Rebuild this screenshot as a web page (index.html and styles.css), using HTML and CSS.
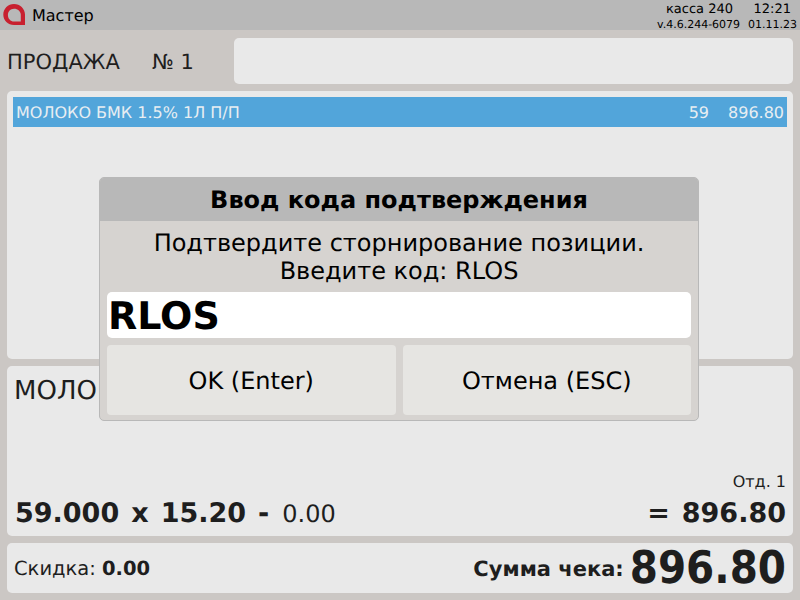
FILE: index.html
```html
<!DOCTYPE html>
<html lang="ru">
<head>
<meta charset="utf-8">
<title>Мастер</title>
<link rel="stylesheet" href="styles.css">
</head>
<body>
<div class="screen">
  <header class="topbar">
    <div class="brand">
      <svg class="logo" width="22" height="22" viewBox="0 0 22 22"><path fill-rule="evenodd" fill="#c8202f" d="M11 0C5 0 0.300 4.700 0.300 10.500C0.300 16.500 5 21 11 21L22 21L22 10.500C22 4.700 17 0 11 0ZM11 4.700C14.800 4.700 17.800 7.300 17.800 10.800L17.800 17.500L11 17.500C7.500 17.500 4.900 14.400 4.900 10.900C4.900 7.500 7.500 4.700 11 4.700Z"/></svg>
      <span class="brand-name">Мастер</span>
    </div>
    <div class="status">
      <div class="status-row status-top"><span>касса 240</span><span class="clock">12:21</span></div>
      <div class="status-row status-bottom"><span>v.4.6.244-6079</span><span class="date">01.11.23</span></div>
    </div>
  </header>
  <div class="sale-row">
    <div class="sale-label"><span class="sale-title">ПРОДАЖА</span><span class="sale-num">№ 1</span></div>
    <div class="search"></div>
  </div>
  <section class="panel list">
    <div class="item"><span>МОЛОКО БМК 1.5% 1Л П/П</span><span class="item-nums"><span>59</span><span>896.80</span></span></div>
  </section>
  <section class="panel detail">
    <div class="detail-name">МОЛОКО БМК 1.5% 1Л П/П</div>
    <div class="dept">Отд. 1</div>
    <div class="calc">
      <div class="calc-left"><b>59.000</b><b>x</b><b>15.20</b><b>-</b><span class="disc">0.00</span></div>
      <div class="calc-right"><b>=</b><b>896.80</b></div>
    </div>
  </section>
  <section class="panel totals">
    <div class="discount">Скидка: <b>0.00</b></div>
    <div class="total"><b class="total-label">Сумма чека:</b><b class="total-value">896.80</b></div>
  </section>
  <div class="dialog">
    <div class="dialog-title">Ввод кода подтверждения</div>
    <div class="dialog-msg">Подтвердите сторнирование позиции.<br>Введите код: RLOS</div>
    <div class="code">RLOS</div>
    <div class="buttons">
      <div class="btn">OK (Enter)</div>
      <div class="btn">Отмена (ESC)</div>
    </div>
  </div>
</div>
</body>
</html>
```
FILE: styles.css
```css
* { box-sizing: border-box; }
html, body { margin: 0; padding: 0; }
body { font-family: "DejaVu Sans", sans-serif; color: #1e1e1e; text-rendering: geometricPrecision; }
.screen { position: relative; width: 800px; height: 600px; background: #cbc7c4; overflow: hidden; display: flex; flex-direction: column; }
.topbar { height: 30px; background: #b8b8b8; display: flex; justify-content: space-between; color: #000; flex: none; }
.brand { display: flex; align-items: center; padding-left: 3px; gap: 7px; }
.logo { display: block; }
.brand-name { font-size: 16px; }
.status { padding: 2px 3px 0 0; width: 143px; }
.status-row { display: flex; justify-content: space-between; }
.status-top { font-size: 13px; line-height: 15px; padding: 0 6px 0 9px; }
.status-bottom { font-size: 11px; line-height: 15px; white-space: nowrap; }
.sale-row { display: flex; height: 46px; margin: 8px 7px 0; flex: none; }
.sale-label { width: 227px; display: flex; align-items: center; font-size: 21px; padding-top: 2px; }
.sale-title { width: 145px; }
.search { flex: 1; background: #e9e9e9; border-radius: 5px; }
.panel { background: #e9e9e9; border-radius: 5px; margin: 7px 7px 0; flex: none; }
.list { height: 268px; padding: 6px; }
.item { height: 30px; background: #52a5da; color: #e8eef2; display: flex; justify-content: space-between; align-items: center; font-size: 16px; padding: 1px 3px 0; }
.item-nums { display: flex; gap: 19px; }
.detail { height: 170px; padding: 9px 7px 0; display: flex; flex-direction: column; }
.detail-name { font-size: 26px; line-height: 32px; height: 32px; white-space: nowrap; }
.dept { margin-top: 66px; text-align: right; font-size: 16px; line-height: 18px; }
.calc { display: flex; justify-content: space-between; align-items: baseline; margin-top: 7px; font-size: 27px; line-height: 32px; }
.calc-left { display: flex; gap: 12px; align-items: baseline; padding-left: 1px; }
.disc { font-size: 24px; margin-left: 1px; }
.calc-right { display: flex; gap: 12px; }
.totals { height: 50px; display: flex; justify-content: space-between; align-items: center; padding: 0 7px; }
.discount { font-size: 19.500px; }
.total { display: flex; align-items: center; gap: 6px; }
.total-label { font-size: 21px; padding-top: 1px; }
.total-value { font-family: "DejaVu Sans Condensed", "DejaVu Sans", sans-serif; font-stretch: condensed; font-size: 45px; line-height: 50px; }
.dialog { position: absolute; left: 99px; top: 177px; width: 600px; height: 244px; background: #d6d3d0; border: 1px solid #b8b8b8; border-radius: 5px; overflow: hidden; padding: 0 7px; color: #000; }
.dialog-title { height: 43px; margin: 0 -7px; background: #b8b8b8; font-size: 24px; font-weight: 700; text-align: center; line-height: 44px; }
.dialog-msg { height: 71px; text-align: center; font-size: 24px; line-height: 28px; padding-top: 8px; }
.code { height: 46px; background: #fff; border-radius: 5px; font-size: 38px; font-weight: 700; line-height: 48px; padding-left: 1px; }
.buttons { display: flex; gap: 7px; margin-top: 7px; }
.btn { flex: 1; height: 70px; background: #e6e5e2; border-radius: 4px; display: flex; align-items: center; justify-content: center; font-size: 24px; padding-top: 2px; }
```
